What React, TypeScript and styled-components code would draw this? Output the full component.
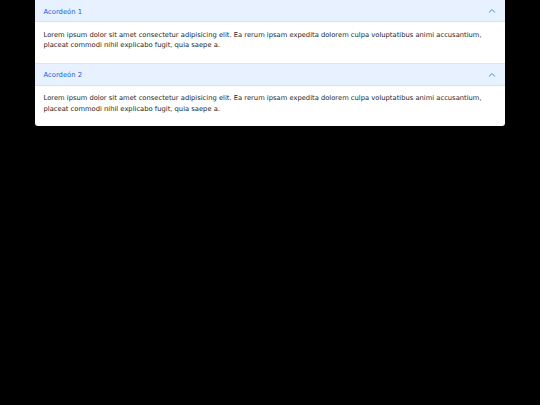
import React, {useState} from "react";
import styled, {createGlobalStyle} from "styled-components";

const GlobalStyle = createGlobalStyle`
  html, body {
    margin: 0;
    background: #000;
  }
  body {
    font-family: "DejaVu Sans", sans-serif;
  }
`;

const Page = styled.div`
  width: 540px;
  height: 405px;
  padding: 0 35px;
  box-sizing: border-box;
`;

const Accordion = styled.div`
  background: #fff;
  border-radius: 0 0 3px 3px;
  overflow: hidden;
`;

const Item = styled.div`
  border-top: 1px solid #dfe3ea;
  &:first-child {
    border-top: none;
  }
`;

const Header = styled.button<{ $open: boolean }>`
  display: flex;
  align-items: center;
  justify-content: space-between;
  width: 100%;
  height: 22px;
  padding: 2px 9px 0 8.5px;
  border: none;
  background: ${p => p.$open ? '#e7f1ff' : '#fff'};
  color: ${p => p.$open ? '#0c63e4' : '#212529'};
  font-family: "DejaVu Sans", sans-serif;
  font-size: 6.8px;
  line-height: 10.4px;
  text-align: left;
  cursor: pointer;
  box-shadow: inset 0 -1px 0 rgba(0, 0, 0, .06);
`;

const Chevron = styled.svg<{ $open: boolean }>`
  width: 8px;
  height: 8px;
  margin-top: -2px;
  transform: ${p => p.$open ? 'none' : 'rotate(180deg)'};
`;

const Body = styled.div`
  padding: 7.5px 8.5px 12px;
  font-size: 6.75px;
  line-height: 10.6px;
  color: #212529;
`;

const text = "Lorem ipsum dolor sit amet consectetur adipisicing elit. Ea rerum ipsam expedita dolorem culpa voluptatibus animi accusantium, placeat commodi nihil explicabo fugit, quia saepe a.";

function App() {
    const [open, setOpen] = useState<boolean[]>([true, true]);
    const toggle = (i: number) => setOpen(open.map((o, j) => j === i ? !o : o));

    return (
        <Page>
            <GlobalStyle/>
            <Accordion>
                {['Acordeón 1', 'Acordeón 2'].map((title, i) => (
                    <Item key={title}>
                        <Header $open={open[i]} onClick={() => toggle(i)}>
                            {title}
                            <Chevron $open={open[i]} viewBox="0 0 16 16" fill="none" stroke="#0c63e4"
                                     strokeWidth="1.5" strokeLinecap="round" strokeLinejoin="round">
                                <path d="M2.5 10.5l5.5-5.5 5.5 5.5"/>
                            </Chevron>
                        </Header>
                        {open[i] && <Body>{text}</Body>}
                    </Item>
                ))}
            </Accordion>
        </Page>
    );
}

export default App;
